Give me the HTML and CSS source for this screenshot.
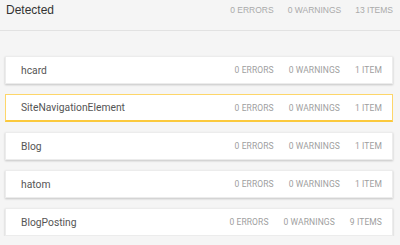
FILE: index.html
```html
<!DOCTYPE html>
<html lang="en">
<head>
  <meta charset="UTF-8">
  <title>Detected</title>
  <link rel="stylesheet" href="styles.css">
</head>
<body>
  <div class="header">
    <div class="title">Detected</div>
    <div class="counts">
      <span>0 ERRORS</span>
      <span>0 WARNINGS</span>
      <span>13 ITEMS</span>
    </div>
  </div>

  <div class="list">
    <div class="card">
      <div class="name">hcard</div>
      <div class="stats"><span>0 ERRORS</span><span>0 WARNINGS</span><span>1 ITEM</span></div>
    </div>
    <div class="card selected">
      <div class="name">SiteNavigationElement</div>
      <div class="stats"><span>0 ERRORS</span><span>0 WARNINGS</span><span>1 ITEM</span></div>
    </div>
    <div class="card">
      <div class="name">Blog</div>
      <div class="stats"><span>0 ERRORS</span><span>0 WARNINGS</span><span>1 ITEM</span></div>
    </div>
    <div class="card">
      <div class="name">hatom</div>
      <div class="stats"><span>0 ERRORS</span><span>0 WARNINGS</span><span>1 ITEM</span></div>
    </div>
    <div class="card">
      <div class="name">BlogPosting</div>
      <div class="stats"><span>0 ERRORS</span><span>0 WARNINGS</span><span>9 ITEMS</span></div>
    </div>
  </div>
</body>
</html>
```

FILE: styles.css
```css
body {
  margin: 0;
  background-color: #f5f5f5;
  font-family: Roboto, 'Liberation Sans', sans-serif;
}
.header {
  display: flex;
  align-items: center;
  justify-content: space-between;
  height: 20px;
  padding: 0 7px 10px 6px;
  border-bottom: 1px solid #e2e2e2;
  font-family: 'Liberation Sans', Arial, sans-serif;
}
.title {
  font-size: 12px;
  color: #333333;
}
.counts {
  display: flex;
  gap: 14px;
  font-size: 8.5px;
  color: #aaaaaa;
}
.list {
  display: flex;
  flex-direction: column;
  gap: 10px;
  padding: 25px 7px 0 5px;
}
.card {
  display: flex;
  align-items: center;
  justify-content: space-between;
  height: 28px;
  box-sizing: border-box;
  padding: 0 10px 0 15px;
  background: #ffffff;
  border: 1px solid #ececec;
  box-shadow: 0 1px 2px rgba(0, 0, 0, 0.2);
}
.card.selected {
  border: 1px solid #fdd66a;
  border-bottom: 2px solid #fbc93d;
  box-shadow: none;
}
.name {
  font-size: 10.3px;
  color: #555555;
}
.stats {
  display: flex;
  gap: 15px;
  font-size: 8.5px;
  letter-spacing: 0.1px;
  color: #9e9e9e;
}
```
